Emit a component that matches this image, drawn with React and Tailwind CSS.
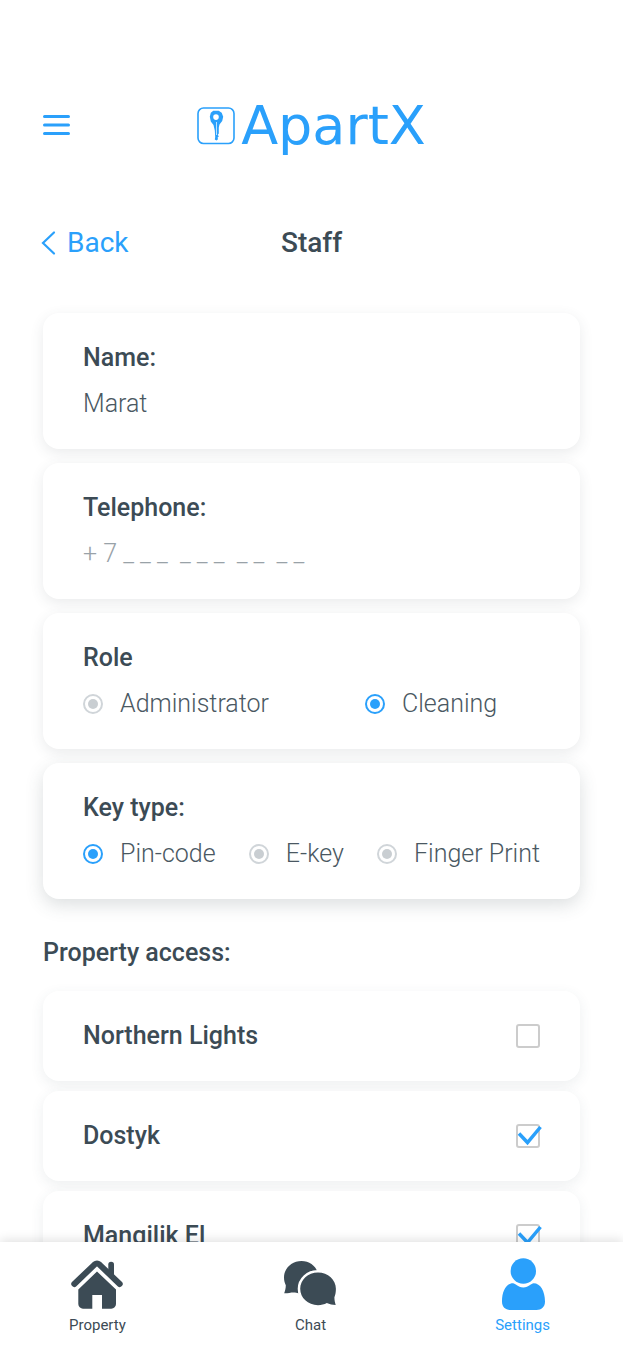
import { useState } from 'react';

const ROLES = ['Administrator', 'Cleaning'];
const KEY_TYPES = ['Pin-code', 'E-key', 'Finger Print'];
const PROPERTIES = ['Northern Lights', 'Dostyk', 'Mangilik El'];

function Logo() {
  return (
    <a href="#home" className="flex items-center gap-1.5 text-[#2aa0fb]">
      <svg className="size-[38px]" viewBox="0 0 38 38" fill="none">
        <rect x="1" y="1" width="36" height="35.500" rx="5.500" stroke="currentColor" strokeWidth="1.6" />
        <path
          fill="currentColor"
          fillRule="evenodd"
          d="M16.300 3.800h5.400l3 2 1.500 4-1 4.200-2.700 3.500-.7 3v6l-1 1.300 1 1.700-1.200 1 .4 1.700-1.500 1.300-1.700-1 .4-2.500-.4-6.500-1.300-5.500-2.700-3.500-1-4.700 1-4zM19 7.300a2.800 2.800 0 1 0 0 5.600 2.800 2.800 0 1 0 0-5.600z"
        />
        <path d="M19.500 15v13" stroke="white" strokeWidth=".7" />
      </svg>
      <span className="font-['DejaVu_Sans',sans-serif] text-[54px] leading-14">ApartX</span>
    </a>
  );
}

function Card({ raised, children }) {
  return (
    <div
      className={`flex flex-col gap-3.5 rounded-2xl bg-white px-10 py-[29px] ${
        raised ? 'shadow-[0_6px_18px_rgba(60,75,85,0.18)]' : 'shadow-[0_4px_14px_rgba(60,75,85,0.11)]'
      }`}
    >
      {children}
    </div>
  );
}

function TextField({ id, label, ...props }) {
  return (
    <Card>
      <label htmlFor={id} className="text-[25px] leading-8 font-medium">
        {label}
      </label>
      <input
        id={id}
        className="h-8 w-full bg-transparent text-[25px] leading-8 font-light text-[#4a5862] outline-none placeholder:text-[#99a2a8]"
        {...props}
      />
    </Card>
  );
}

function RadioGroup({ name, label, options, value, onChange, className, raised }) {
  return (
    <Card raised={raised}>
      <h2 id={`${name}-label`} className="text-[25px] leading-8 font-medium">
        {label}
      </h2>
      <div role="radiogroup" aria-labelledby={`${name}-label`} className={`flex ${className}`}>
        {options.map((option) => (
          <label
            key={option}
            className="flex items-center gap-[17px] text-[25px] leading-8 font-light whitespace-nowrap text-[#4a5862]"
          >
            <input
              type="radio"
              name={name}
              checked={value === option}
              onChange={() => onChange(option)}
              className="size-5 shrink-0 appearance-none rounded-full border-2 border-[#d0d5d9] bg-[#c9ced2] bg-clip-content p-[3px] checked:border-[#2aa0fb] checked:bg-[#2aa0fb]"
            />
            {option}
          </label>
        ))}
      </div>
    </Card>
  );
}

function PropertyRow({ name, checked, onToggle }) {
  return (
    <label className="flex items-center justify-between rounded-2xl bg-white px-10 py-[29px] text-[25px] leading-8 font-medium shadow-[0_4px_14px_rgba(60,75,85,0.09)]">
      {name}
      <span className="relative size-6">
        <input
          type="checkbox"
          checked={checked}
          onChange={onToggle}
          className="block size-6 appearance-none rounded-[3px] border-2 border-[#cccccc]"
        />
        {checked && (
          <svg
            className="pointer-events-none absolute inset-0 size-6 overflow-visible text-[#2aa0fb]"
            viewBox="0 0 24 24"
            fill="none"
          >
            <path d="M3 9.500l8.500 9L24.500 3" stroke="currentColor" strokeWidth="3.500" />
          </svg>
        )}
      </span>
    </label>
  );
}

function HouseIcon() {
  return (
    <svg className="h-[52px] w-[54px]" viewBox="0 0 54 52" fill="currentColor">
      <path d="M38.300 6.500a2.800 2.800 0 0 1 5.700 0V19l-5.700-5z" />
      <path
        d="M4.300 26L24.500 6.600Q27 4.400 29.500 6.600L49.700 26"
        fill="none"
        stroke="currentColor"
        strokeWidth="6"
        strokeLinecap="round"
      />
      <path d="M27 13.500L46 31.500V46a4.700 4.700 0 0 1-4.700 4.700H32V37h-9.700v13.700H13A4.700 4.700 0 0 1 8.300 46V31.500z" />
    </svg>
  );
}

function ChatIcon() {
  return (
    <svg className="h-[52px] w-[54px]" viewBox="0 0 54 52" fill="currentColor">
      <path d="M17.500 3C8 3 0 10 0 19.500c0 3.500.8 5.500 1.800 7.800C1.800 30 1.200 32.500.2 35.300c4 .2 8-1.300 12-.5L17.500 36C27 36 34.500 29 34.500 19.500S27 3 17.500 3z" />
      <path
        d="M34 14.500c-10 0-17.800 7.200-17.800 16.300S24 47.200 34 47.200c3.300 0 6.300-.8 8.800-2.200 2.800 1.300 5.700 1.800 8.900 2-.8-2.500-1.300-4.800-1.300-7.700 1.100-2.500 1.500-5.500 1.500-8.500 0-9.100-7.900-16.300-17.900-16.300z"
        stroke="white"
        strokeWidth="5"
        style={{ paintOrder: 'stroke' }}
      />
    </svg>
  );
}

function PersonIcon() {
  return (
    <svg className="h-[52px] w-[54px]" viewBox="0 0 54 52" fill="currentColor">
      <circle cx="27.300" cy="13" r="12.700" />
      <path d="M17 25.300c2.500 0 4.500 4.200 10.300 4.200S35.100 25.300 37.600 25.300C44.500 25.300 49 33.500 49 43.500c0 5.500-3.500 8.500-8.500 8.500h-26C9.500 52 6 49 6 43.500 6 33.500 10.100 25.300 17 25.300z" />
    </svg>
  );
}

const TABS = [
  { label: 'Property', Icon: HouseIcon },
  { label: 'Chat', Icon: ChatIcon },
  { label: 'Settings', Icon: PersonIcon, active: true },
];

export default function App() {
  const [name, setName] = useState('Marat');
  const [phone, setPhone] = useState('');
  const [role, setRole] = useState('Cleaning');
  const [keyType, setKeyType] = useState('Pin-code');
  const [access, setAccess] = useState(['Dostyk', 'Mangilik El']);

  const toggleAccess = (property) => {
    setAccess((prev) =>
      prev.includes(property) ? prev.filter((p) => p !== property) : [...prev, property]
    );
  };

  return (
    <div className="flex h-screen flex-col bg-white font-[Roboto,sans-serif] text-[#3c4b55]">
      <div className="min-h-0 flex-1 overflow-y-auto px-[43px] pb-8 [scrollbar-width:none]">
        {/* Header */}
        <header className="grid grid-cols-[1fr_auto_1fr] items-center pt-[98px]">
          <button type="button" aria-label="Menu" className="w-fit text-[#2aa0fb]">
            <svg className="h-6 w-[27px]" viewBox="0 0 27 24" fill="none">
              <path
                d="M1.500 2.500h24M1.500 11h24M1.500 19.500h24"
                stroke="currentColor"
                strokeWidth="3"
                strokeLinecap="round"
              />
            </svg>
          </button>
          <Logo />
        </header>

        <div className="mt-[73px] grid grid-cols-[1fr_auto_1fr] items-center text-[28px] leading-8">
          <a href="#back" className="flex items-center gap-2.5 text-[#2aa0fb]">
            <svg className="h-6 w-3.5 overflow-visible" viewBox="0 0 14 24" fill="none">
              <path d="M11 1.500L0 12l11 10.500" stroke="currentColor" strokeWidth="2.200" strokeLinecap="round" />
            </svg>
            Back
          </a>
          <h1 className="font-medium">Staff</h1>
        </div>

        {/* Staff details */}
        <div className="mt-[54px] flex flex-col gap-3.5">
          <TextField id="name" label="Name:" value={name} onChange={(e) => setName(e.target.value)} />
          <TextField
            id="telephone"
            type="tel"
            label="Telephone:"
            placeholder="+ 7 _ _ _  _ _ _  _ _  _ _"
            value={phone}
            onChange={(e) => setPhone(e.target.value)}
          />
          <RadioGroup
            name="role"
            label="Role"
            options={ROLES}
            value={role}
            onChange={setRole}
            className="gap-24"
          />
          <RadioGroup
            name="key-type"
            label="Key type:"
            options={KEY_TYPES}
            value={keyType}
            onChange={setKeyType}
            className="justify-between"
            raised
          />
        </div>

        {/* Property access */}
        <h2 className="mt-[38px] text-[25px] leading-8 font-medium">Property access:</h2>
        <div className="mt-[22px] flex flex-col gap-2.5">
          {PROPERTIES.map((property) => (
            <PropertyRow
              key={property}
              name={property}
              checked={access.includes(property)}
              onToggle={() => toggleAccess(property)}
            />
          ))}
        </div>
      </div>

      {/* Bottom navigation */}
      <nav className="relative flex justify-between bg-white pt-4 pr-[73px] pb-[15px] pl-[69px] shadow-[0_-2px_10px_rgba(0,0,0,0.12)]">
        {TABS.map(({ label, Icon, active }) => (
          <a
            key={label}
            href={`#${label.toLowerCase()}`}
            className={`flex flex-col items-center gap-[5px] text-[15px] leading-5 ${active ? 'text-[#2aa0fb]' : ''}`}
          >
            <Icon />
            {label}
          </a>
        ))}
      </nav>
    </div>
  );
}
